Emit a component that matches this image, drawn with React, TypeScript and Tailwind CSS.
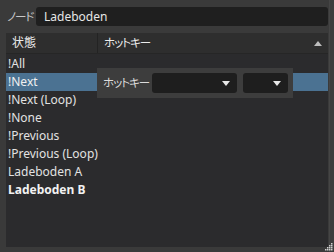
import React from "react";

const rows = [
  { name: "!All" },
  { name: "!Next", selected: true },
  { name: "!Next (Loop)" },
  { name: "!None" },
  { name: "!Previous" },
  { name: "!Previous (Loop)" },
  { name: "Ladeboden A" },
  { name: "Ladeboden B", bold: true },
];

const font = { fontFamily: '"Noto Sans", "Noto Sans CJK JP", sans-serif' };

function DownArrow() {
  return (
    <svg width="8" height="5" viewBox="0 0 8 5">
      <path d="M0 0 L8 0 L4 5 Z" fill="#e8e8e8" />
    </svg>
  );
}

export default function App() {
  return (
    <div
      className="relative w-[334px] h-[252px] bg-[#3a3a3a] text-[12px] text-[#e2e2e2] overflow-hidden flex flex-col [font-feature-settings:'palt']"
      style={font}
    >
      {/* node name row */}
      <div className="flex items-center h-[33px] pl-[7px] pr-[6px] gap-[3px]">
        <span className="text-[#c8c8c8] text-[11.5px] tracking-[-1px] leading-none whitespace-nowrap w-[26px]">ノード</span>
        <div className="flex-1 h-[19px] bg-[#1f1f1f] rounded-[3px] flex items-center px-[8px] text-[#e6e6e6]">
          Ladeboden
        </div>
      </div>

      {/* list */}
      <div className="ml-[6px] mr-[6px] h-[214px] bg-[#2b2b2d] flex flex-col">
        <div className="flex h-[21px] bg-[#2e2e2e] border-b border-[#262626] items-center">
          <div className="w-[92px] h-full flex items-center pl-[6px] border-r border-[#232323] text-[#ececec] text-[12px]">
            状態
          </div>
          <div className="flex-1 h-full flex items-center pl-[6px] pr-[6px] justify-between text-[#ececec]">
            <span className="whitespace-nowrap text-[11.5px] tracking-[-1px]">ホットキー</span>
            <svg width="8" height="5" viewBox="0 0 8 5">
              <path d="M0 5 L8 5 L4 0 Z" fill="#bdbdbd" />
            </svg>
          </div>
        </div>
        <div className="flex flex-col pt-[1px]">
          {rows.map((r) => (
            <div
              key={r.name}
              className={`h-[18px] flex items-center pl-[2px] ${
                r.selected ? "bg-[#4b7292] text-[#f0f0f0]" : ""
              } ${r.bold ? "font-bold text-[#f2f2f2]" : ""}`}
            >
              {r.name}
            </div>
          ))}
        </div>
      </div>

      {/* right edge strip */}
      <div className="absolute right-0 top-0 w-[5px] h-full bg-[#3d3d3d] border-l border-[#454545]" />

      {/* size grip */}
      <svg className="absolute right-[1px] bottom-[1px]" width="10" height="10" viewBox="0 0 10 10">
        {[
          [8, 2], [6, 4], [8, 4], [4, 6], [6, 6], [8, 6], [2, 8], [4, 8], [6, 8], [8, 8],
        ].map(([x, y]) => (
          <rect key={`${x}-${y}`} x={x} y={y} width="1.5" height="1.5" fill="#cfcfcf" />
        ))}
      </svg>

      {/* hotkey editor overlay */}
      <div className="absolute left-[97px] top-[68px] w-[196px] h-[30px] bg-[#3d3d3d] flex items-center pl-[6px] pr-[5px]">
        <span className="text-[#dcdcdc] text-[11.5px] tracking-[-1px] w-[49px] shrink-0 whitespace-nowrap">ホットキー</span>
        <div className="w-[85px] h-[20px] bg-[#1e1e1e] rounded-[3px] flex items-center justify-end pr-[7px]">
          <DownArrow />
        </div>
        <div className="ml-[6px] w-[45px] h-[20px] bg-[#1e1e1e] rounded-[3px] flex items-center justify-end pr-[7px]">
          <DownArrow />
        </div>
      </div>
    </div>
  );
}
